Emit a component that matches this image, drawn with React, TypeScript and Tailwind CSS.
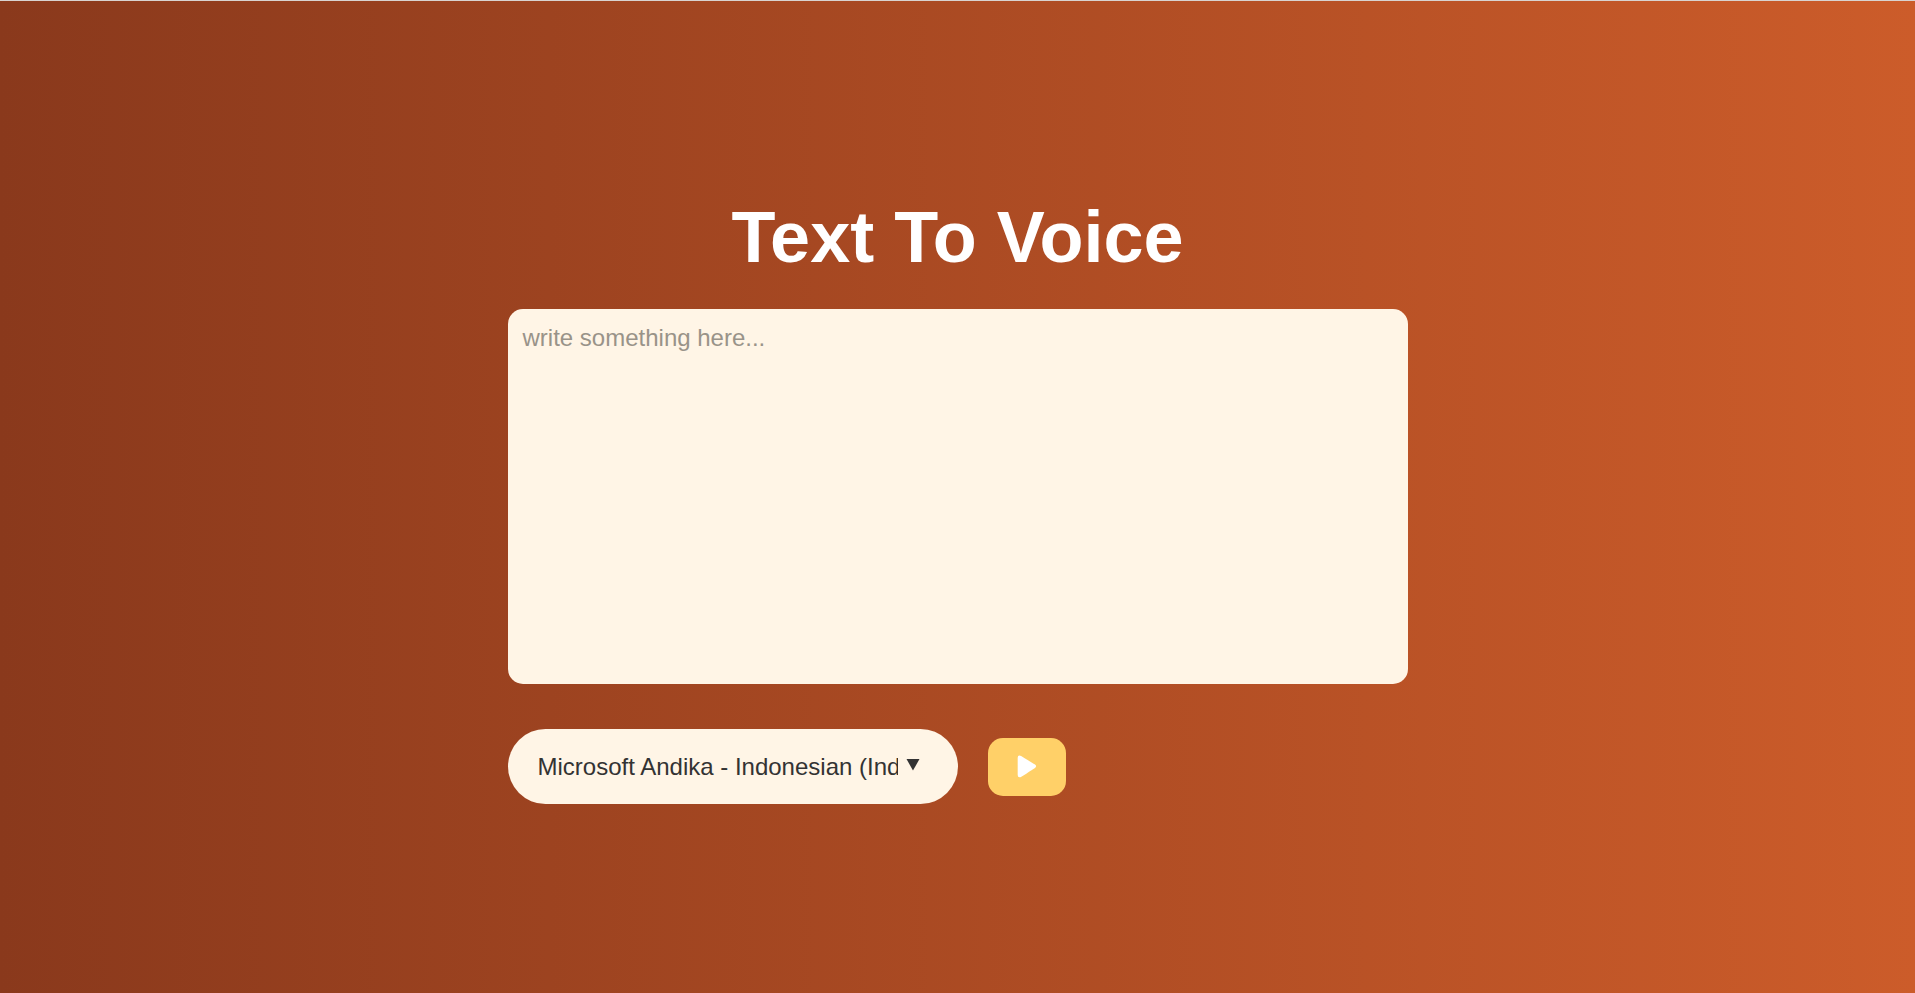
import { useState } from "react";

const voices = [
  "Microsoft Andika - Indonesian (Indonesia)",
  "Google US English",
  "Google UK English Female",
];

export default function App() {
  const [text, setText] = useState("");
  const [voice, setVoice] = useState(voices[0]);

  const speak = () => {
    const utterance = new SpeechSynthesisUtterance(text);
    const match = speechSynthesis.getVoices().find((v) => v.name === voice);
    if (match) utterance.voice = match;
    speechSynthesis.speak(utterance);
  };

  return (
    <main className="flex min-h-screen flex-col items-center justify-center border-t border-[#d9d3d0] bg-linear-to-r/srgb from-[#8a391c] to-[#cc5c2a] px-4 pb-px font-['Liberation_Sans',Arial,sans-serif]">
      <h1 className="mb-6 text-center text-7xl leading-24 font-bold text-white">Text To Voice</h1>
      <div className="flex w-full max-w-[900px] flex-col gap-[45px]">
        <textarea
          aria-label="Text to speak"
          className="block h-[375px] w-full resize-none rounded-[15px] bg-[#fff5e6] p-[15px] text-2xl leading-7 text-[#333333] outline-none placeholder:text-[#999389]"
          placeholder="write something here..."
          value={text}
          onChange={(e) => setText(e.target.value)}
        />
        <div className="flex items-center gap-[30px]">
          <div className="relative w-1/2">
            <select
              aria-label="Voice"
              className="block h-[75px] w-full appearance-none rounded-full bg-[#fff5e6] pr-[60px] pl-[30px] text-2xl text-[#333333] outline-none"
              value={voice}
              onChange={(e) => setVoice(e.target.value)}
            >
              {voices.map((name) => (
                <option key={name}>{name}</option>
              ))}
            </select>
            <svg
              aria-hidden="true"
              className="pointer-events-none absolute top-[30px] right-[38px] h-3 w-[14px]"
              viewBox="0 0 14 12"
              fill="#333333"
            >
              <path d="M0.5 0h13L7 11.5z" />
            </svg>
          </div>
          <button
            type="button"
            aria-label="Play"
            onClick={speak}
            className="flex h-[58px] w-[78px] items-center justify-center rounded-[15px] bg-[#ffd068]"
          >
            <svg aria-hidden="true" className="h-6 w-5" viewBox="0 0 20 24" fill="#ffffff">
              <path d="M0.7 2.8Q0.7 0 3.4 0.8Q4.3 1.1 18 9.6Q20.2 11.2 18 12.9Q4.6 21.6 3.4 22.2Q0.7 22.8 0.7 20z" />
            </svg>
          </button>
        </div>
      </div>
    </main>
  );
}
